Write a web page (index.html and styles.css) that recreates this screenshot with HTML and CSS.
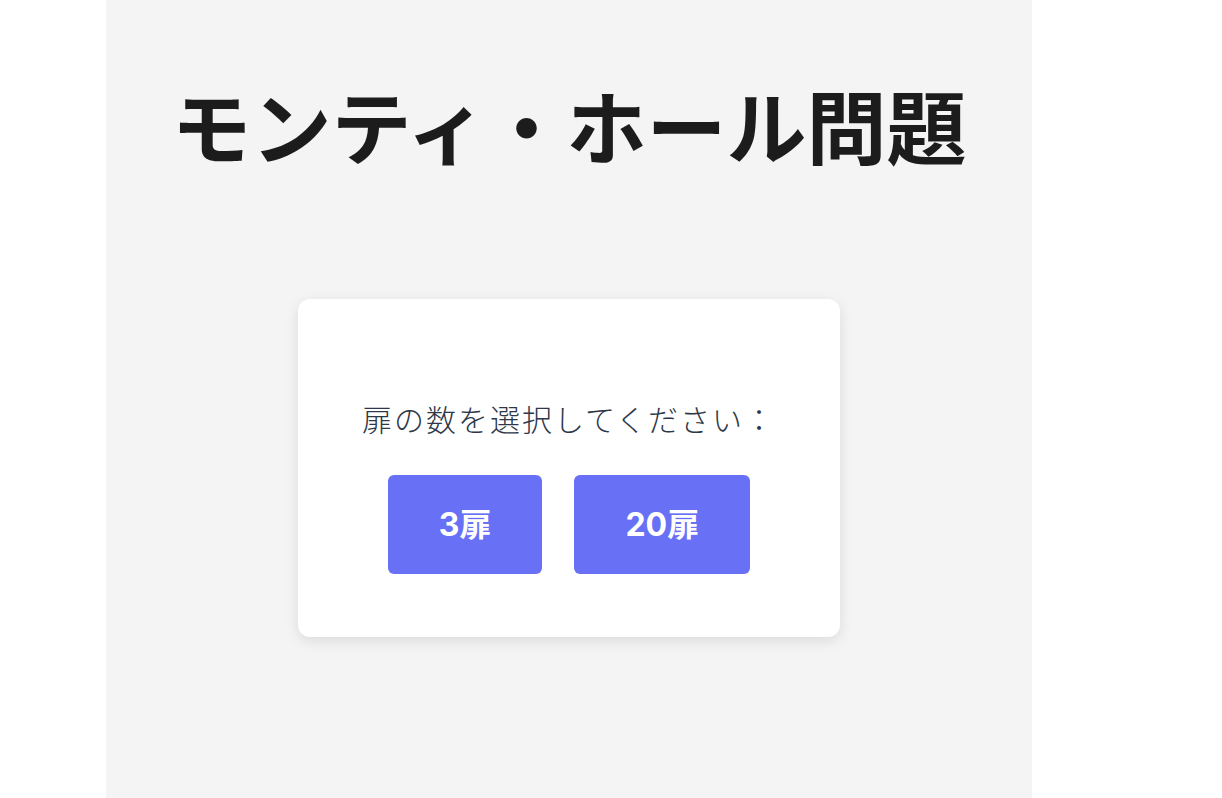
FILE: index.html
```html
<!DOCTYPE html>
<html lang="ja">
<head>
<meta charset="utf-8">
<title>モンティ・ホール問題</title>
<link rel="stylesheet" href="styles.css">
</head>
<body>
<main class="panel">
  <h1 class="title">モンティ・ホール問題</h1>
  <section class="card">
    <p class="prompt">扉の数を選択してください：</p>
    <div class="choices">
      <button class="choice">3扉</button>
      <button class="choice">20扉</button>
    </div>
  </section>
</main>
</body>
</html>
```

FILE: styles.css
```css
html, body {
  margin: 0;
  padding: 0;
  background: #ffffff;
}

body {
  font-family: "Noto Sans CJK JP", "Noto Sans", sans-serif;
}

.panel {
  box-sizing: border-box;
  margin-left: 106px;
  width: 926px;
  min-height: 100vh;
  background: #f4f4f4;
  padding-top: 75px;
  display: flex;
  flex-direction: column;
  align-items: center;
}

.title {
  margin: 0;
  font-size: 80px;
  line-height: 96px;
  font-weight: 700;
  color: #1c1c1c;
  text-align: center;
}

.card {
  box-sizing: border-box;
  margin-top: 128px;
  width: 542px;
  height: 338px;
  background: #ffffff;
  border-radius: 12px;
  box-shadow: 0 4px 14px rgba(0, 0, 0, 0.1);
  padding-top: 97px;
  display: flex;
  flex-direction: column;
  align-items: center;
}

.prompt {
  margin: 0;
  font-size: 30px;
  line-height: 44px;
  letter-spacing: 2px;
  font-weight: 300;
  color: #2d3748;
}

.choices {
  margin-top: 35px;
  display: flex;
  gap: 32px;
}

.choice {
  border: none;
  border-radius: 6px;
  background: #6870f6;
  color: #ffffff;
  font-family: "Inter", "Noto Sans CJK JP", sans-serif;
  font-weight: 700;
  font-size: 32px;
  line-height: 35px;
  padding: 32px 51px;
  cursor: pointer;
}
```
